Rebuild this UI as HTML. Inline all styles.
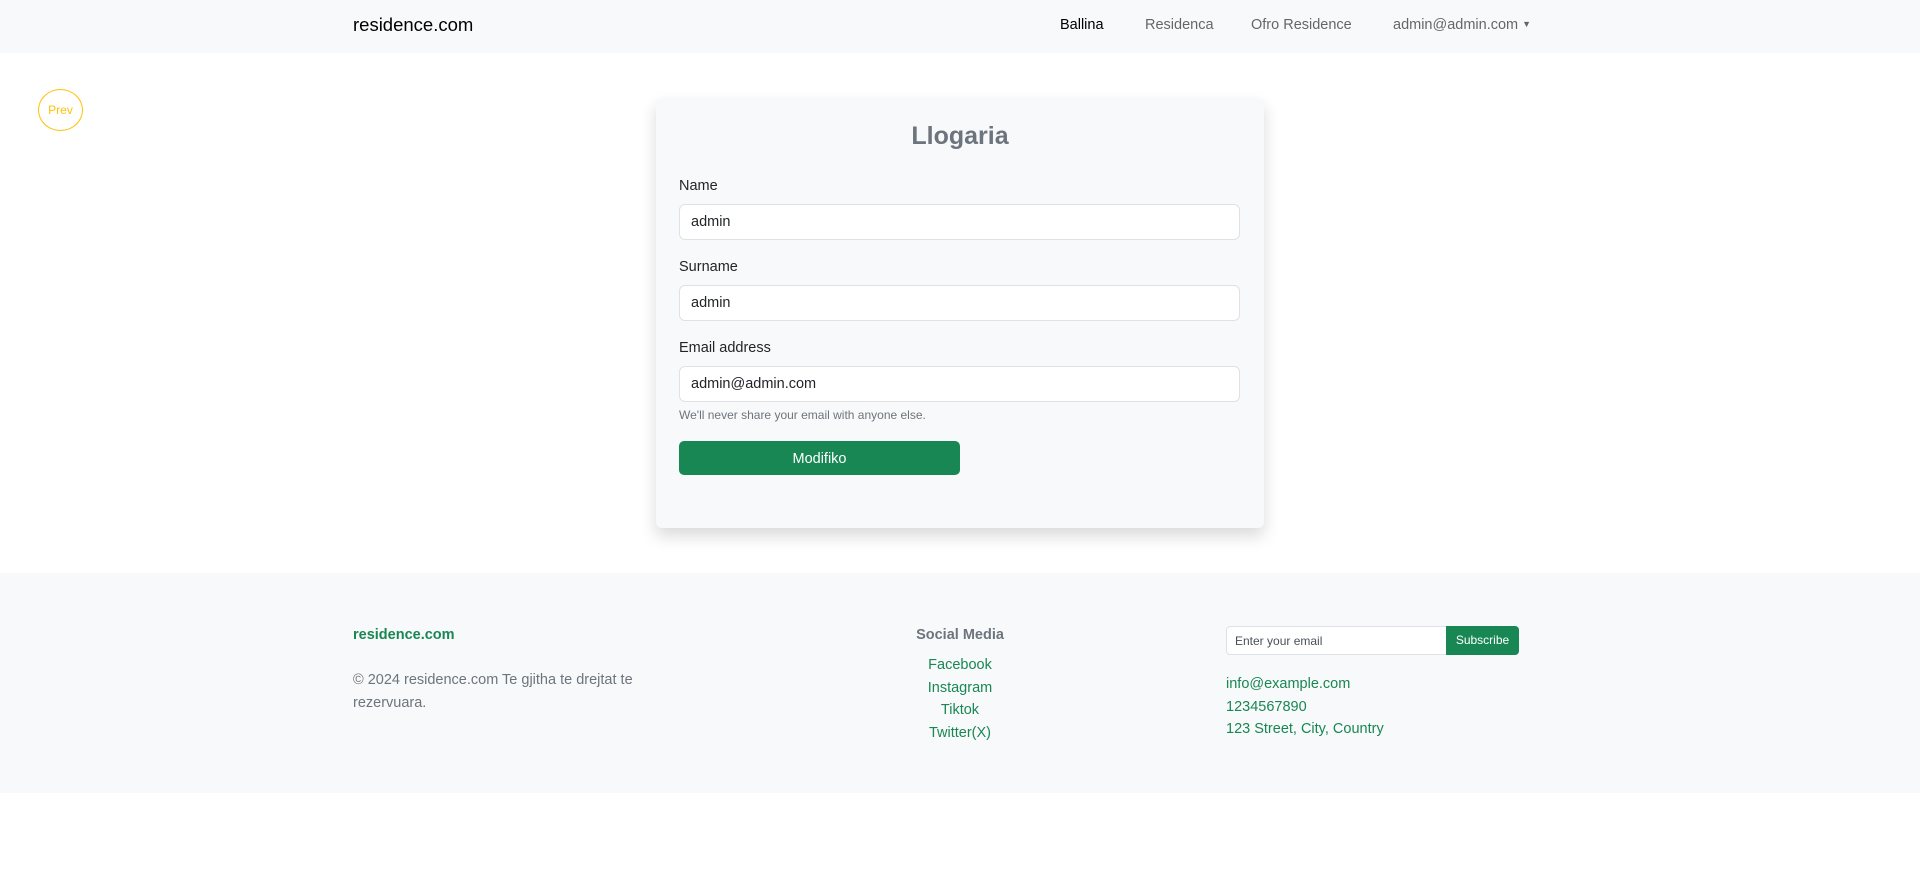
<!DOCTYPE html>
<html><head><meta charset="utf-8"><style>
*{box-sizing:border-box;margin:0;padding:0}
body{width:1920px;height:879px;background:#fff;font-family:"Liberation Sans",sans-serif;position:relative;overflow:hidden;color:#212529}
.a{position:absolute;white-space:nowrap}
nav{position:absolute;left:0;top:0;width:1920px;height:53px;background:#f8f9fa}
.nl{font-size:14.5px;color:rgba(0,0,0,.6);top:17px}
.card{position:absolute;left:656px;top:98px;width:608px;height:430px;background:#f8f9fa;border-radius:6px;box-shadow:0 8px 16px rgba(0,0,0,.15)}
.lbl{font-size:14.5px;color:#212529}
.inp{position:absolute;left:679px;width:561px;height:36px;background:#fff;border:1px solid #dee2e6;border-radius:6px;font-size:14.5px;padding:9px 11px;color:#212529}
footer{position:absolute;left:0;top:573px;width:1920px;height:220px;background:#f8f9fa}
.g{color:#198754}
</style></head><body>
<nav></nav>
<div class="a" style="left:353px;top:14px;font-size:18.5px;color:#000">residence.com</div>
<div class="a nl" style="left:1060px;color:#000">Ballina</div>
<div class="a nl" style="left:1145px">Residenca</div>
<div class="a nl" style="left:1251px">Ofro Residence</div>
<div class="a nl" style="left:1393px">admin@admin.com <span style="font-size:9px;vertical-align:2px">▼</span></div>

<div class="a" style="left:38px;top:89px;width:45px;height:42px;border:1px solid #ffc107;border-radius:50%;color:#ffc107;font-size:12px;text-align:center;line-height:40px">Prev</div>

<div class="card"></div>
<div class="a" style="left:656px;width:608px;text-align:center;top:122px;font-size:25px;font-weight:bold;color:#6c757d">Llogaria</div>
<div class="a lbl" style="left:679px;top:178px">Name</div>
<div class="inp" style="top:204px">admin</div>
<div class="a lbl" style="left:679px;top:259px">Surname</div>
<div class="inp" style="top:285px">admin</div>
<div class="a lbl" style="left:679px;top:340px">Email address</div>
<div class="inp" style="top:366px">admin@admin.com</div>
<div class="a" style="left:679px;top:408px;font-size:12px;color:#6c757d">We'll never share your email with anyone else.</div>
<div class="a" style="left:679px;top:441px;width:281px;height:34px;background:#198754;border-radius:5px;color:#fff;font-size:14.5px;text-align:center;line-height:36px">Modifiko</div>

<footer></footer>
<div class="a g" style="left:353px;top:627px;font-size:14.5px;font-weight:bold">residence.com</div>
<div class="a" style="left:353px;top:669px;font-size:14.5px;color:#6c757d;line-height:23px;white-space:normal;width:300px">© 2024 residence.com Te gjitha te drejtat te rezervuara.</div>
<div class="a" style="left:860px;width:200px;text-align:center;top:627px;font-size:14.5px;font-weight:bold;color:#6c757d">Social Media</div>
<div class="a g" style="left:860px;width:200px;text-align:center;top:654px;font-size:14.5px;line-height:22.5px">Facebook<br>Instagram<br>Tiktok<br>Twitter(X)</div>
<div class="a" style="left:1226px;top:626px;width:221px;height:29px;background:#fff;border:1px solid #dee2e6;border-radius:4px 0 0 4px;font-size:12px;color:#495057;padding:7px 8px">Enter your email</div>
<div class="a" style="left:1446px;top:626px;width:73px;height:29px;background:#198754;border-radius:0 4px 4px 0;color:#fff;font-size:12px;text-align:center;line-height:29px">Subscribe</div>
<div class="a g" style="left:1226px;top:673px;font-size:14.5px;line-height:22.5px">info@example.com<br>1234567890<br>123 Street, City, Country</div>
</body></html>
